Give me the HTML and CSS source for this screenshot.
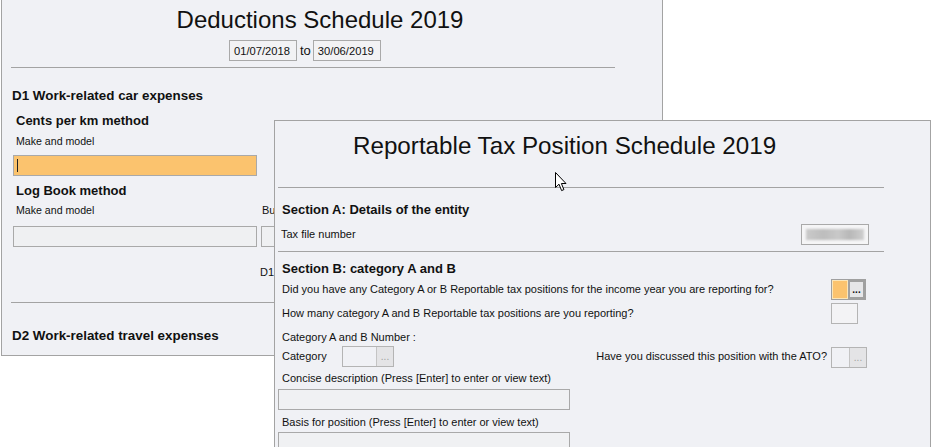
FILE: index.html
```html
<!DOCTYPE html>
<html>
<head>
<meta charset="utf-8">
<link rel="stylesheet" href="styles.css">
</head>
<body>
<div class="desk">
  <section class="win win-ded">
    <h1 class="title ded-title">Deductions Schedule 2019</h1>
    <div class="dates">
      <span class="datebox">01/07/2018</span>
      <span class="to">to</span>
      <span class="datebox">30/06/2019</span>
    </div>
    <hr class="rule ded-rule">
    <h2 class="head d1">D1 Work-related car expenses</h2>
    <h3 class="subhead cents">Cents per km method</h3>
    <div class="lbl ind mm1">Make and model</div>
    <div class="field orange wide mf1"><span class="caret"></span></div>
    <h3 class="subhead logbook">Log Book method</h3>
    <div class="lbl-row mm2">
      <span class="lbl ind mm-w">Make and model</span>
      <span class="lbl">Bu</span>
    </div>
    <div class="field-row mf2">
      <div class="field wide"></div>
      <div class="field narrow"></div>
    </div>
    <div class="d1amt-row"><span class="lbl">D1</span></div>
    <hr class="rule ded-rule2">
    <h2 class="head d2">D2 Work-related travel expenses</h2>
  </section>

  <section class="win win-rtp">
    <h1 class="title rtp-title">Reportable Tax Position Schedule 2019</h1>
    <hr class="rule rtp-rule">
    <h2 class="head secA">Section A: Details of the entity</h2>
    <div class="row tfn">
      <span class="lbl">Tax file number</span>
      <span class="blurbox"><span class="blur"></span></span>
    </div>
    <hr class="rule rtp-rule2">
    <h2 class="head secB">Section B: category A and B</h2>
    <div class="qrow q1">
      <span class="lbl">Did you have any Category A or B Reportable tax positions for the income year you are reporting for?</span>
      <span class="combo active"><span class="cf"></span><span class="cb">...</span></span>
    </div>
    <div class="qrow q2">
      <span class="lbl">How many category A and B Reportable tax positions are you reporting?</span>
      <span class="smallbox"></span>
    </div>
    <div class="lbl catnum">Category A and B Number :</div>
    <div class="catrow">
      <span class="lbl catlbl">Category</span>
      <span class="combo cat"><span class="cf"></span><span class="cb">...</span></span>
      <span class="lbl ato">Have you discussed this position with the ATO?</span>
      <span class="combo atoc"><span class="cf"></span><span class="cb">...</span></span>
    </div>
    <div class="lbl concise">Concise description (Press [Enter] to enter or view text)</div>
    <div class="field text1"></div>
    <div class="lbl basis">Basis for position (Press [Enter] to enter or view text)</div>
    <div class="field text2"></div>
  </section>

  <svg class="pointer" width="13" height="20" viewBox="0 0 13 20">
    <path d="M0.5 0.5 L0.5 15.5 L4 12.2 L6.6 18.6 L8.9 17.6 L6.4 11.5 L11 11.5 Z" fill="#fff" stroke="#000" stroke-width="1" stroke-linejoin="miter"/>
  </svg>
</div>
</body>
</html>
```
FILE: styles.css
```css
* { box-sizing: border-box; }
html, body {
  margin: 0;
  padding: 0;
  background: #ffffff;
  width: 932px;
  height: 447px;
  overflow: hidden;
  font-family: "Liberation Sans", Arial, sans-serif;
  color: #111;
}
.desk {
  position: relative;
  width: 932px;
  height: 447px;
  overflow: hidden;
}
.win {
  position: absolute;
  background: #f0f1f5;
  border: 1px solid #a3a3a3;
  overflow: hidden;
}
.win-ded {
  left: 1px;
  top: -2px;
  width: 662px;
  height: 358px;
  padding-top: 7px;
}
.win-rtp {
  left: 274px;
  top: 120px;
  width: 657px;
  height: 340px;
  padding-top: 11px;
}
h1, h2, h3 { margin: 0; font-weight: normal; }
.title {
  font-size: 24px;
  line-height: 28px;
  font-weight: normal;
  color: #111;
  white-space: nowrap;
}
.ded-title {
  text-align: center;
  padding-right: 24px;
}
.rtp-title {
  padding-left: 78px;
  font-size: 24.2px;
}
.dates {
  display: flex;
  align-items: center;
  margin-top: 6px;
  padding-left: 227px;
  height: 21px;
}
.datebox {
  display: flex;
  align-items: center;
  width: 68px;
  height: 21px;
  padding: 0 0 0 4px;
  border: 1px solid #a9a9a9;
  background: #f2f2f4;
  font-size: 11.2px;
}
.to {
  padding: 0 2px 0 3px;
  font-size: 13px;
}
.rule {
  border: 0;
  height: 1px;
  background: #a3a3a3;
  margin: 0;
}
.ded-rule {
  margin: 6px 0 0 9px;
  width: 604px;
}
.head {
  font-weight: bold;
  font-size: 13px;
  line-height: 16px;
  white-space: nowrap;
}
.subhead {
  font-weight: bold;
  font-size: 13px;
  line-height: 16px;
  padding-left: 14px;
}
.lbl {
  font-size: 11px;
  line-height: 13px;
  white-space: nowrap;
}
.ind { padding-left: 14px; }
.d1 { margin-top: 20px; padding-left: 10px; font-size: 13.4px; }
.cents { margin-top: 9px; }
.mm1 { margin-top: 6px; font-size: 10.6px; }
.field {
  height: 21px;
  border: 1px solid #a9a9a9;
  background: #eff0f2;
}
.wide { width: 244px; }
.orange { background: #fbc36e; position: relative; }
.caret {
  position: absolute;
  left: 3px;
  top: 3px;
  width: 1px;
  height: 13px;
  background: #222;
}
.mf1 { margin: 7px 0 0 11px; }
.logbook { margin-top: 7px; }
.lbl-row { display: flex; margin-top: 5px; }
.mm-w { width: 260px; font-size: 10.6px; flex: none; }
.field-row { display: flex; gap: 4px; margin: 9px 0 0 11px; }
.narrow { width: 120px; }
.d1amt-row { margin-top: 19px; padding-left: 258px; display: flex; }
.ded-rule2 { margin: 23px 0 0 9px; width: 640px; }
.d2 { margin-top: 25px; padding-left: 10px; font-size: 13.4px; }

.rtp-rule { margin: 27px 0 0 3px; width: 606px; }
.secA { margin-top: 14px; padding-left: 7px; }
.row {
  display: flex;
  align-items: center;
  justify-content: space-between;
  margin-top: 6px;
  padding: 0 61px 0 6px;
  height: 21px;
}
.blurbox {
  width: 68px;
  height: 21px;
  border: 1px solid #a9a9a9;
  background: #f5f5f6;
  display: flex;
  align-items: center;
  justify-content: center;
}
.blur {
  width: 58px;
  height: 11px;
  background: linear-gradient(90deg, #cacaca, #bdbdbd 30%, #c9c9c9 55%, #b8b8b8 75%, #cfcfcf);
  filter: blur(1px);
}
.rtp-rule2 { margin: 6px 0 0 3px; width: 606px; }
.secB { margin-top: 9px; padding-left: 7px; }
.qrow {
  display: flex;
  align-items: center;
  justify-content: space-between;
  padding: 0 64px 0 7px;
}
.qrow .lbl { width: 548px; }
.q1 { margin-top: 2px; height: 21px; }
.q2 { margin-top: 3px; height: 21px; }
.combo {
  display: flex;
  width: 35px;
  height: 21px;
  border: 1px solid #b4b4b4;
  background: #f0f1f5;
}
.combo .cf { flex: 1; }
.combo .cb {
  width: 17px;
  border-left: 1px solid #c4c4c4;
  background: #e4e4e6;
  font-size: 10px;
  line-height: 19px;
  text-align: center;
  color: #a0a0a0;
  letter-spacing: 0;
}
.combo.active { border-color: #a0a0a0; }
.combo.active .cf { background: #fbc36e; border: 1px solid #fbe6b8; }
.combo.active .cb {
  border: 2px solid #a0a0a0;
  background: #e6e6e8;
  color: #111;
  font-weight: bold;
  line-height: 15px;
  font-size: 10px;
}
.smallbox {
  width: 27px;
  height: 21px;
  border: 1px solid #b4b4b4;
  background: #f3f3f5;
  margin-right: 8px;
}
.catnum { margin-top: 7px; padding-left: 7px; }
.catrow {
  display: flex;
  align-items: center;
  margin-top: 1px;
  height: 22px;
  padding-left: 7px;
}
.catlbl { width: 60px; }
.cat { width: 52px; }
.ato { margin-left: auto; margin-right: 4px; }
.atoc { width: 36px; margin-right: 63px; margin-top: 2px; }
.concise { margin-top: 5px; padding-left: 7px; }
.text1 { width: 292px; margin: 4px 0 0 3px; background: #f0f1f3; }
.basis { margin-top: 6px; padding-left: 7px; }
.text2 { width: 292px; margin: 3px 0 0 3px; height: 30px; background: #f0f1f3; }

.pointer {
  position: absolute;
  left: 555px;
  top: 172px;
}
```
